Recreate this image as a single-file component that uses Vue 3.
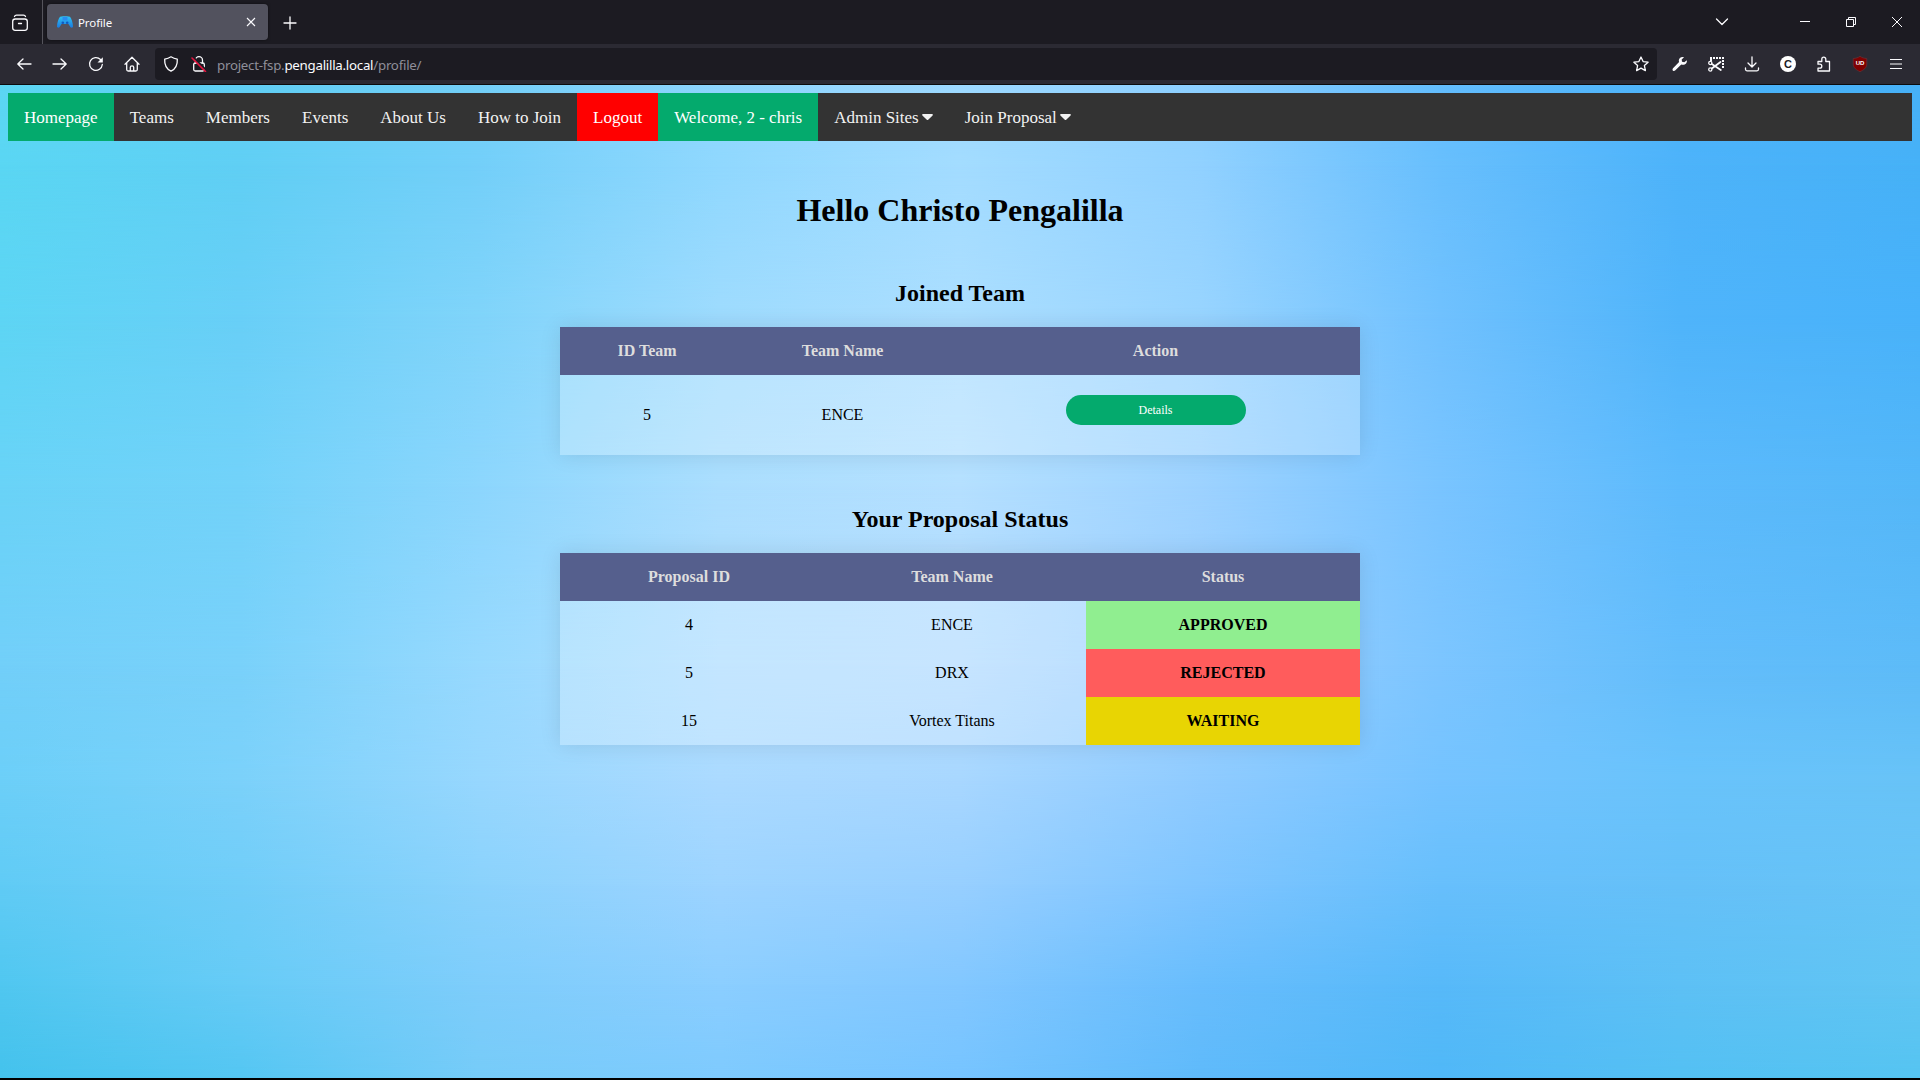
<script setup>
const links = [
  { label: 'Homepage', tone: 'green' },
  { label: 'Teams' },
  { label: 'Members' },
  { label: 'Events' },
  { label: 'About Us' },
  { label: 'How to Join' },
  { label: 'Logout', tone: 'red' },
  { label: 'Welcome, 2 - chris', tone: 'green' },
  { label: 'Admin Sites', menu: true },
  { label: 'Join Proposal', menu: true },
]
const proposals = [
  { id: 4, team: 'ENCE', status: 'APPROVED' },
  { id: 5, team: 'DRX', status: 'REJECTED' },
  { id: 15, team: 'Vortex Titans', status: 'WAITING' },
]

// Backdrop colour mesh: each row is a horizontal gradient faded into the next one.
const mesh = [
  { y: 0, c: ['#5cd6f3', '#60cff5', '#73cff8', '#8ed5fd', '#9dd9ff', '#8ccfff', '#63bdfd', '#4bb3fa', '#47b1f7'] },
  { y: 80, c: ['#5ad6f3', '#60cff4', '#73cff9', '#90d8fe', '#a3dcff', '#91d1ff', '#68bffd', '#4db3fa', '#46b1f7'] },
  { y: 230, c: ['#5dd5f4', '#68cff7', '#80d4fa', '#9edbfe', '#abdeff', '#98d4ff', '#70c1fe', '#4fb4fa', '#48b2fa'] },
  { y: 400, c: ['#69d3f7', '#72d2f9', '#8cd6fd', '#abdefe', '#b5e0ff', '#9dd2ff', '#79c4ff', '#5cbafc', '#54b7f8'] },
  { y: 580, c: ['#72cff9', '#79d1fa', '#97d9fe', '#b0deff', '#b4dcff', '#9dd0ff', '#7cc5ff', '#63bdfb', '#5dbbf8'] },
  { y: 695, c: ['#6ccff8', '#7bd1fa', '#97d7fe', '#abdaff', '#a8d7ff', '#8fcbff', '#75c3ff', '#69c3fb', '#68c3f7'] },
  { y: 800, c: ['#60cbf5', '#70cdf8', '#8ad2fc', '#9dd4ff', '#97cfff', '#7fc5ff', '#67bffc', '#65c0f8', '#67c4f6'] },
  { y: 900, c: ['#50c7f0', '#66cbf6', '#7ecdfb', '#8bceff', '#82c7ff', '#68bdfd', '#57b9f9', '#5dc0f5', '#61c5f3'] },
  { y: 993, c: ['#44c2ec', '#54c6f2', '#76cbf8', '#7ecafe', '#76c4ff', '#5fbafa', '#50b8f7', '#54c0f3', '#55c4f1'] },
]
const layers = mesh.map((row, i) => {
  const layer = { background: `linear-gradient(90deg, ${row.c.join(', ')})` }
  if (i) layer.maskImage = `linear-gradient(180deg, transparent ${mesh[i - 1].y}px, #000 ${row.y}px)`
  return layer
})
</script>

<template>
  <div class="window">
    <header class="tabs">
      <div class="view"><svg width="20" height="20" viewBox="0 0 20 20" class="ln"><path d="M4.500 2.500Q5 1.200 6.500 1.200h7q1.500 0 2 1.300" /><rect x="2.700" y="5" width="14.600" height="11.300" rx="2.500" /><path d="M8.500 9.500h3" /></svg></div>
      <div class="tab">
        <svg width="16" height="16" viewBox="0 0 16 16"><defs><linearGradient id="pad" x1="0" y1="0" x2="0" y2="1"><stop offset="0" stop-color="#2fc3f5" /><stop offset="1" stop-color="#1a7be0" /></linearGradient></defs><path d="M3 2.700 6 2.300h4l3 .4c1.500 1.800 3 6 3 10-.5 1.400-2 1.300-2.700.3L11.500 10h-7L2.700 13C2 14 .5 14 0 12.700 0 8.700 1.500 4.500 3 2.700Z" fill="url(#pad)" /><path d="M5.500 3h5v3.500h-5z" fill="#2a8cf0" /><circle cx="5.800" cy="8.700" r="1.300" fill="#1258bd" /><circle cx="10.200" cy="8.700" r="1.300" fill="#1258bd" /></svg>
        <span>Profile</span>
        <svg class="x" width="10" height="10" viewBox="0 0 10 10"><path d="m1 1 8 8M9 1 1 9" /></svg>
      </div>
      <svg class="plus ln" width="14" height="14" viewBox="0 0 14 14"><path d="M7 1v12M1 7h12" /></svg>
      <div class="controls">
        <svg class="ln chev" width="14" height="14" viewBox="0 0 14 14"><path d="m1.500 4 5.500 5.500L12.500 4" /></svg>
        <svg width="12" height="12" viewBox="0 0 12 12" class="px"><path d="M1 5.500h10" /></svg>
        <svg width="12" height="12" viewBox="0 0 12 12" class="px"><path d="M1.500 3.500h7v7h-7zM3.500 3.500v-2h7v7h-2" /></svg>
        <svg width="12" height="12" viewBox="0 0 12 12" class="px"><path d="m1 1 10 10M11 1 1 11" /></svg>
      </div>
    </header>
    <div class="toolbar">
      <div class="nav">
        <svg width="16" height="16" viewBox="0 0 16 16" class="ln"><path d="M7 3 1.800 8 7 13M2 8h13" /></svg>
        <svg width="16" height="16" viewBox="0 0 16 16" class="ln"><path d="m9 3 5.200 5L9 13M14 8H1" /></svg>
        <svg width="16" height="16" viewBox="0 0 16 16" class="ln"><path d="M14.300 8.500A6.400 6.400 0 1 1 12.500 3.500" /><path d="M14.800 1.200v5.300H9.500z" fill="#fbfbfe" stroke="none" /></svg>
        <svg width="16" height="16" viewBox="0 0 16 16" class="ln"><path d="M1 8.200 8 1.200l7 7M2.700 7v6.500q0 1.500 1.500 1.500h7.600q1.500 0 1.500-1.500V7M6.300 15v-3.700q0-1.500 1.700-1.500t1.700 1.500V15" /></svg>
      </div>
      <div class="address">
        <svg width="16" height="16" viewBox="0 0 16 16" class="ln"><path d="M8 .8c2 1.300 4 2 6.300 2.400.3 5-1.500 9.600-6.300 12C3.200 12.800 1.400 8.200 1.700 3.200 4 2.800 6 2.100 8 .8Z" /></svg>
        <svg width="16" height="16" viewBox="0 0 16 16" class="ln lock"><path d="M4.500 7V4.200a3.500 3.500 0 0 1 7 0V7" /><rect x="2.700" y="7" width="10.600" height="8" rx="1.500" /><path d="M2.500 1.500 15 14" stroke="#1c1b22" stroke-width="2" /><path d="M1 2 14.500 15.500" stroke="#e8133f" stroke-width="1.600" /></svg>
        <span class="url">project-fsp.<b>pengalilla.local</b>/profile/</span>
        <svg class="ln star" width="16" height="16" viewBox="0 0 16 16"><path d="m8 1 2.100 4.600 5 .6-3.700 3.400 1 5L8 12.100l-4.400 2.500 1-5L.9 6.200l5-.6Z" /></svg>
      </div>
      <div class="tools">
        <svg width="16" height="16" viewBox="0 0 16 16"><path d="M14.800 4.200 12.300 6.200 10 5.800 9.700 3.500 12 1.300C9.500.3 6.800 2 6.800 4.600c0 .6.100 1 .3 1.500L1 12.300c-.7.800-.6 1.800 0 2.400s1.500.5 2.100-.1L9.300 8.500c3.300 1.200 6.200-1.200 5.500-4.300Z" fill="#fbfbfe" /></svg>
        <svg width="16" height="16" viewBox="0 0 16 16" class="ln"><path d="M2 2H16" class="dash" /><path d="M15 4v8M3 3v2" class="dash" /><circle cx="2.300" cy="7" r="1.600" /><circle cx="2.300" cy="13.500" r="1.600" /><path d="m3.800 8 9 6M3.800 12.500 12.500 6" stroke-width="1.800" /></svg>
        <svg width="16" height="16" viewBox="0 0 16 16" class="ln"><path d="M8 .8v9.700M4 7l4 4 4-4M1.500 12v1.300q0 1.500 1.500 1.500h10q1.500 0 1.500-1.500V12" /></svg>
        <span class="c">C</span>
        <svg width="16" height="16" viewBox="0 0 16 16" class="ln"><path d="M2 15h11.500V5.500h-3.700V3.200a2 2 0 0 0-4 0v2.300H2v2.700h1.800a2 2 0 0 1 0 4H2Z" /></svg>
        <span class="ub"><svg width="16" height="16" viewBox="0 0 16 16"><path d="M8 .3c2 1.400 4 2 6.800 2.200v5.500c0 4-3.300 6-6.800 7.700C4.500 14 1.200 12 1.200 8V2.500C4 2.300 6 1.700 8 .3Z" fill="#800000" stroke="#66343a" stroke-width=".7" /></svg><i>UD</i></span>
        <svg width="16" height="16" viewBox="0 0 16 16" class="px"><path d="M2 3.500h12M2 8h12M2 12.500h12" /></svg>
      </div>
    </div>
    <main class="page">
      <div class="backdrop"><div v-for="(layer, i) in layers" :key="i" :style="layer"></div></div>
      <nav class="menu">
        <a v-for="link in links" :key="link.label" :class="link.tone">{{ link.label }}<svg v-if="link.menu" width="11" height="7" viewBox="0 0 11 7"><path d="M1 0h9c.8 0 1.200.8.600 1.400L6.200 5.800c-.4.400-1 .4-1.400 0L.4 1.400C-.2.800.2 0 1 0Z" fill="#f2f2f2" /></svg></a>
      </nav>
      <h1>Hello Christo Pengalilla</h1>
      <h2>Joined Team</h2>
      <table class="joined">
        <thead><tr><th>ID Team</th><th>Team Name</th><th>Action</th></tr></thead>
        <tbody><tr><td>5</td><td>ENCE</td><td><a class="details">Details</a></td></tr></tbody>
      </table>
      <h2>Your Proposal Status</h2>
      <table class="status">
        <thead><tr><th>Proposal ID</th><th>Team Name</th><th>Status</th></tr></thead>
        <tbody>
          <tr v-for="p in proposals" :key="p.id"><td>{{ p.id }}</td><td>{{ p.team }}</td><td :class="p.status.toLowerCase()">{{ p.status }}</td></tr>
        </tbody>
      </table>
    </main>
  </div>
</template>

<style scoped>
.window { width: 1920px; height: 1080px; overflow: hidden; display: flex; flex-direction: column; background: #000; }
svg { flex: none; display: block; }
.ln { fill: none; stroke: #fbfbfe; stroke-width: 1.300; stroke-linecap: round; stroke-linejoin: round; }
.dash { stroke-width: 2; stroke-linecap: butt; stroke-dasharray: 2 1; }
.px { fill: none; stroke: #fbfbfe; stroke-width: 1; }
.tabs { height: 44px; flex: none; display: flex; align-items: center; background: #1c1b22; font: 12px "Noto Sans", sans-serif; color: #fbfbfe; }
.view { width: 43px; height: 44px; box-sizing: border-box; border-right: 1px solid #55545c; display: flex; align-items: center; padding: 3px 0 0 10px; }
.tab { width: 221px; height: 36px; margin-left: 4px; box-sizing: border-box; padding: 0 12px 0 10px; border-radius: 4px; background: #52525e; display: flex; align-items: center; box-shadow: 0 0 3px #0008; }
.tab span { margin-left: 5px; flex: 1; font-size: 11.500px; letter-spacing: -.1px; }
.x { fill: none; stroke: #fbfbfe; stroke-width: 1.100; }
.plus { margin: 1px 0 0 15px; }
.controls { margin-left: auto; display: flex; align-items: center; padding-right: 17px; gap: 34px; }
.chev { margin-right: 36px; }
.toolbar { height: 41px; box-sizing: border-box; flex: none; display: flex; align-items: center; background: #2b2a33; border-bottom: 1px solid #0c0c0d; }
.nav { width: 155px; display: flex; gap: 20px; padding-left: 16px; box-sizing: border-box; }
.address { width: 1502px; height: 32px; box-sizing: border-box; padding: 0 8px; border-radius: 4px; background: #1c1b22; display: flex; align-items: center; }
.lock { margin-left: 12px; }
.url { margin: 2px 0 0 10px; flex: 1; font: 13.300px "Noto Sans", sans-serif; letter-spacing: -.26px; color: #8f8f9a; }
.url b { font-weight: 400; color: #fbfbfe; }
.tools { display: flex; align-items: center; gap: 20px; padding-left: 15px; }
.c { width: 16px; height: 16px; border-radius: 50%; background: #fff; color: #1c1b22; font: bold 11px/16px "Liberation Sans", sans-serif; text-align: center; }
.ub { position: relative; width: 16px; height: 16px; }
.ub i { position: absolute; inset: 0; color: #fff; font: bold 6px/15px "Liberation Sans", sans-serif; text-align: center; }
.page { height: 993px; flex: none; box-sizing: border-box; padding: 8px; position: relative; isolation: isolate; font: 16px "Liberation Serif", "Times New Roman", serif; color: #000; }
.backdrop { position: absolute; inset: 0; z-index: -1; }
.backdrop div { position: absolute; inset: 0; }
.menu { height: 48px; display: flex; background: #333; }
.menu a { height: 48px; box-sizing: border-box; padding: 1px 16px 0; display: flex; align-items: center; gap: 3px; font-size: 17px; color: #f2f2f2; white-space: nowrap; }
.menu .green { background: #04aa6d; color: #fff; }
.menu .red { background: #f00; color: #fff; }
h1 { margin: 51px 0 0; font-size: 32px; line-height: 37px; text-align: center; }
h2 { margin: 51px 0 20px; font-size: 24px; line-height: 27px; text-align: center; }
table { width: 800px; margin: 0 auto; table-layout: fixed; border-collapse: collapse; background: rgba(255, 255, 255, .25); box-shadow: 0 0 20px rgba(0, 0, 0, .1); text-align: center; }
th { height: 48px; padding: 0; background: #555f8d; color: #ddd; }
td { height: 48px; padding: 0; }
.joined td { height: 80px; }
.joined th:nth-child(1) { width: 174px; }
.joined th:nth-child(2) { width: 217px; }
.status th:nth-child(1) { width: 258px; }
.status th:nth-child(2) { width: 268px; }
.details { display: block; width: 180px; height: 30px; margin: 0 auto 10px; border-radius: 16px; background: #04aa6d; color: #fff; font-size: 12px; line-height: 30px; }
.approved, .rejected, .waiting { font-weight: bold; }
.approved { background: #90ee90; }
.rejected { background: #ff5c5c; }
.waiting { background: #e8d503; }
</style>

<style>
body { margin: 0; overflow: hidden; }
</style>
